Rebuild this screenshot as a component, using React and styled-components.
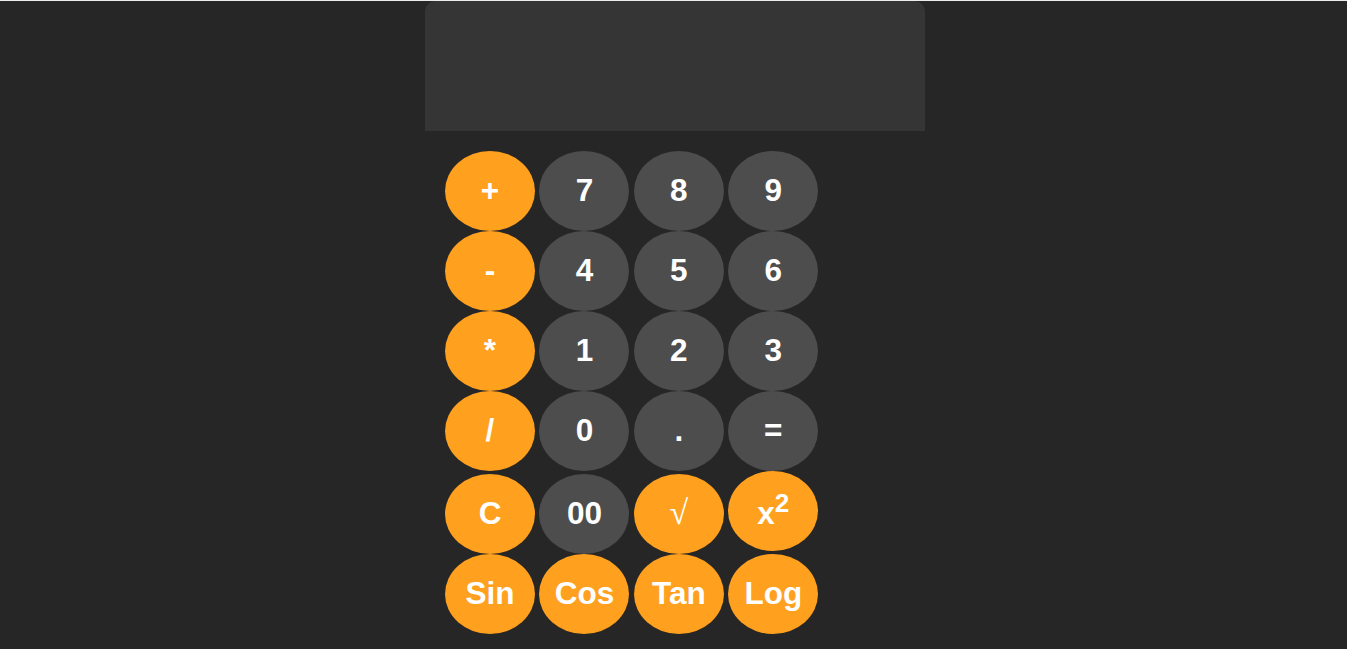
import React from "react";
import styled, { createGlobalStyle } from "styled-components";

const GlobalStyle = createGlobalStyle`
  html, body {
    margin: 0;
    padding: 0;
  }
  body {
    background: #262626;
    border-top: 1px solid #ececec;
    font-family: "Liberation Sans", Arial, sans-serif;
    min-height: calc(100vh - 1px);
  }
`;

const Page = styled.div`
  display: flex;
  justify-content: center;
  padding-left: 3px;
`;

const Calculator = styled.div`
  width: 500px;
  display: flex;
  flex-direction: column;
`;

const Display = styled.div`
  height: 130px;
  background: #353535;
  border-radius: 10px 10px 0 0;
  color: #fff;
  font-size: 40px;
  display: flex;
  align-items: center;
  justify-content: flex-end;
  padding: 0 20px;
  box-sizing: border-box;
`;

const Keypad = styled.div`
  padding: 20px 20px 0;
  display: flex;
  flex-direction: column;
`;

const Row = styled.div`
  display: flex;
  align-items: baseline;
  gap: 4.45px;
`;

const Key = styled.button`
  width: 90px;
  height: 80px;
  border: none;
  border-radius: 50%;
  padding: 0 0 2px;
  background: ${(p) => (p.$accent ? "#ffa01e" : "#4d4d4d")};
  color: #fff;
  font-family: "Liberation Sans", Arial, sans-serif;
  font-size: 31.5px;
  font-weight: bold;
  cursor: pointer;
  outline: none;
`;

const Sup = styled.sup`
  font-size: 0.83em;
`;

const Radical = styled.span`
  font-family: "Liberation Serif", "DejaVu Serif", serif;
  font-weight: normal;
  font-size: 34px;
`;

const rows = [
  [["+", true], ["7"], ["8"], ["9"]],
  [["-", true], ["4"], ["5"], ["6"]],
  [["*", true], ["1"], ["2"], ["3"]],
  [["/", true], ["0"], ["."], ["="]],
  [["C", true], ["00"], ["√", true], ["x2", true]],
  [["Sin", true], ["Cos", true], ["Tan", true], ["Log", true]],
];

function renderLabel(label) {
  if (label === "x2") {
    return (
      <>
        x<Sup>2</Sup>
      </>
    );
  }
  if (label === "√") return <Radical>√</Radical>;
  return label;
}

export default function App() {
  return (
    <>
      <GlobalStyle />
      <Page>
        <Calculator>
          <Display />
          <Keypad>
            {rows.map((row, i) => (
              <Row key={i}>
                {row.map(([label, accent]) => (
                  <Key key={label} $accent={accent}>
                    {renderLabel(label)}
                  </Key>
                ))}
              </Row>
            ))}
          </Keypad>
        </Calculator>
      </Page>
    </>
  );
}
